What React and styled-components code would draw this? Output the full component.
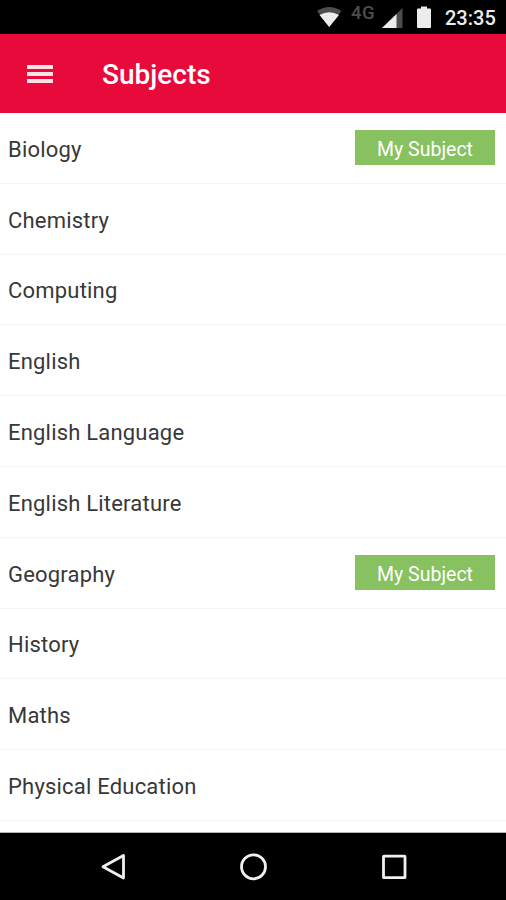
import React from "react";
import styled, { createGlobalStyle } from "styled-components";

const subjects = [
  { name: "Biology", mine: true },
  { name: "Chemistry" },
  { name: "Computing" },
  { name: "English" },
  { name: "English Language" },
  { name: "English Literature" },
  { name: "Geography", mine: true },
  { name: "History" },
  { name: "Maths" },
  { name: "Physical Education" },
];

const App = () => {
  return (
    <Screen>
      <GlobalStyle />
      <StatusBar>
        <StatusIcons viewBox="0 0 126 34" aria-hidden="true">
          <path d="M0 11 Q12.2 3 24.5 11 L12.2 27 Z" fill="#4d4d4d" />
          <path d="M2.5 15 Q12.2 9.5 22 15 L12.2 27 Z" fill="#ececec" />
          <path d="M85.5 8 V28 H65 Z" fill="#4d4d4d" />
          <path d="M79.5 14 V28 H65 Z" fill="#ececec" />
          <path
            d="M104 6.5 H110 V8.5 H113 Q114 8.5 114 9.5 V27 Q114 28 113 28 H101 Q100 28 100 27 V9.5 Q100 8.5 101 8.5 H104 Z"
            fill="#ececec"
          />
        </StatusIcons>
        <Network>4G</Network>
        <Clock>23:35</Clock>
      </StatusBar>

      <AppBar>
        <MenuButton aria-label="Menu">
          <span />
          <span />
          <span />
        </MenuButton>
        <Title>Subjects</Title>
      </AppBar>

      <List>
        {subjects.map(({ name, mine }) => (
          <Row key={name}>
            <Name>{name}</Name>
            {mine && <Badge>My Subject</Badge>}
          </Row>
        ))}
      </List>

      <NavBar>
        <NavIcon viewBox="0 0 30 30">
          <path d="M26.5 3.5 V26 L6 14.8 Z" />
        </NavIcon>
        <NavIcon viewBox="0 0 30 30">
          <circle cx="15.5" cy="14.8" r="12" />
        </NavIcon>
        <NavIcon viewBox="0 0 30 30">
          <rect x="4.5" y="4.2" width="21.5" height="21.5" rx="0.5" />
        </NavIcon>
      </NavBar>
    </Screen>
  );
};

export default App;

const GlobalStyle = createGlobalStyle`
  * {
    box-sizing: border-box;
  }

  body {
    margin: 0;
    background-color: #fff;
    font-family: Roboto, sans-serif;
  }
`;

const Screen = styled.div`
  display: flex;
  flex-direction: column;
  width: 506px;
  height: 900px;
  overflow: hidden;
`;

const StatusBar = styled.div`
  position: relative;
  display: flex;
  align-items: center;
  flex: 0 0 34px;
  padding-left: 317px;
  background-color: #000;
`;

const StatusIcons = styled.svg`
  width: 126px;
  height: 34px;
`;

/* sits over the gap between the wifi and signal icons */
const Network = styled.span`
  position: absolute;
  left: 351px;
  top: 3px;
  color: #4d4d4d;
  font-size: 18.5px;
  font-weight: 500;
  line-height: 20px;
  letter-spacing: 0.6px;
`;

const Clock = styled.span`
  margin: 1px 0 0 2px;
  color: #ececec;
  font-size: 20px;
  font-weight: 500;
  line-height: 24px;
`;

const AppBar = styled.header`
  display: flex;
  align-items: center;
  flex: 0 0 79px;
  padding-left: 27px;
  background-color: #e90a3c;
`;

const MenuButton = styled.button`
  display: flex;
  flex-direction: column;
  gap: 3px;
  width: 26px;
  padding: 0;
  border: none;
  background: none;

  span {
    height: 4px;
    width: 26px;
    background-color: #fde3e5;
  }
`;

const Title = styled.h1`
  margin: 3px 0 0 49px;
  color: #fff;
  font-size: 28px;
  font-weight: 500;
  line-height: 32px;
`;

const List = styled.ul`
  flex: 1;
  margin: 0;
  padding: 0;
  list-style: none;
  background-color: #fff;
  border-bottom: 1px solid #b5b5b5;
  overflow: hidden;
`;

const Row = styled.li`
  display: flex;
  align-items: center;
  justify-content: space-between;
  height: 70.8px;
  padding: 0 11px 0 8px;
  border-bottom: 1px solid #f4f4f4;
`;

const Name = styled.span`
  margin-top: 3.7px;
  color: #383838;
  font-size: 22px;
  line-height: 28px;
  letter-spacing: 0.2px;
`;

const Badge = styled.span`
  width: 140px;
  height: 35px;
  color: #fff;
  background-color: #87c160;
  font-size: 19.5px;
  line-height: 39px;
  text-align: center;
`;

const NavBar = styled.nav`
  display: flex;
  align-items: center;
  justify-content: space-between;
  flex: 0 0 67px;
  padding: 0 97px;
  background-color: #000;
`;

const NavIcon = styled.svg`
  width: 30px;
  height: 30px;
  fill: none;
  stroke: #f0f0f0;
  stroke-width: 2.8;
  stroke-linejoin: round;
`;
